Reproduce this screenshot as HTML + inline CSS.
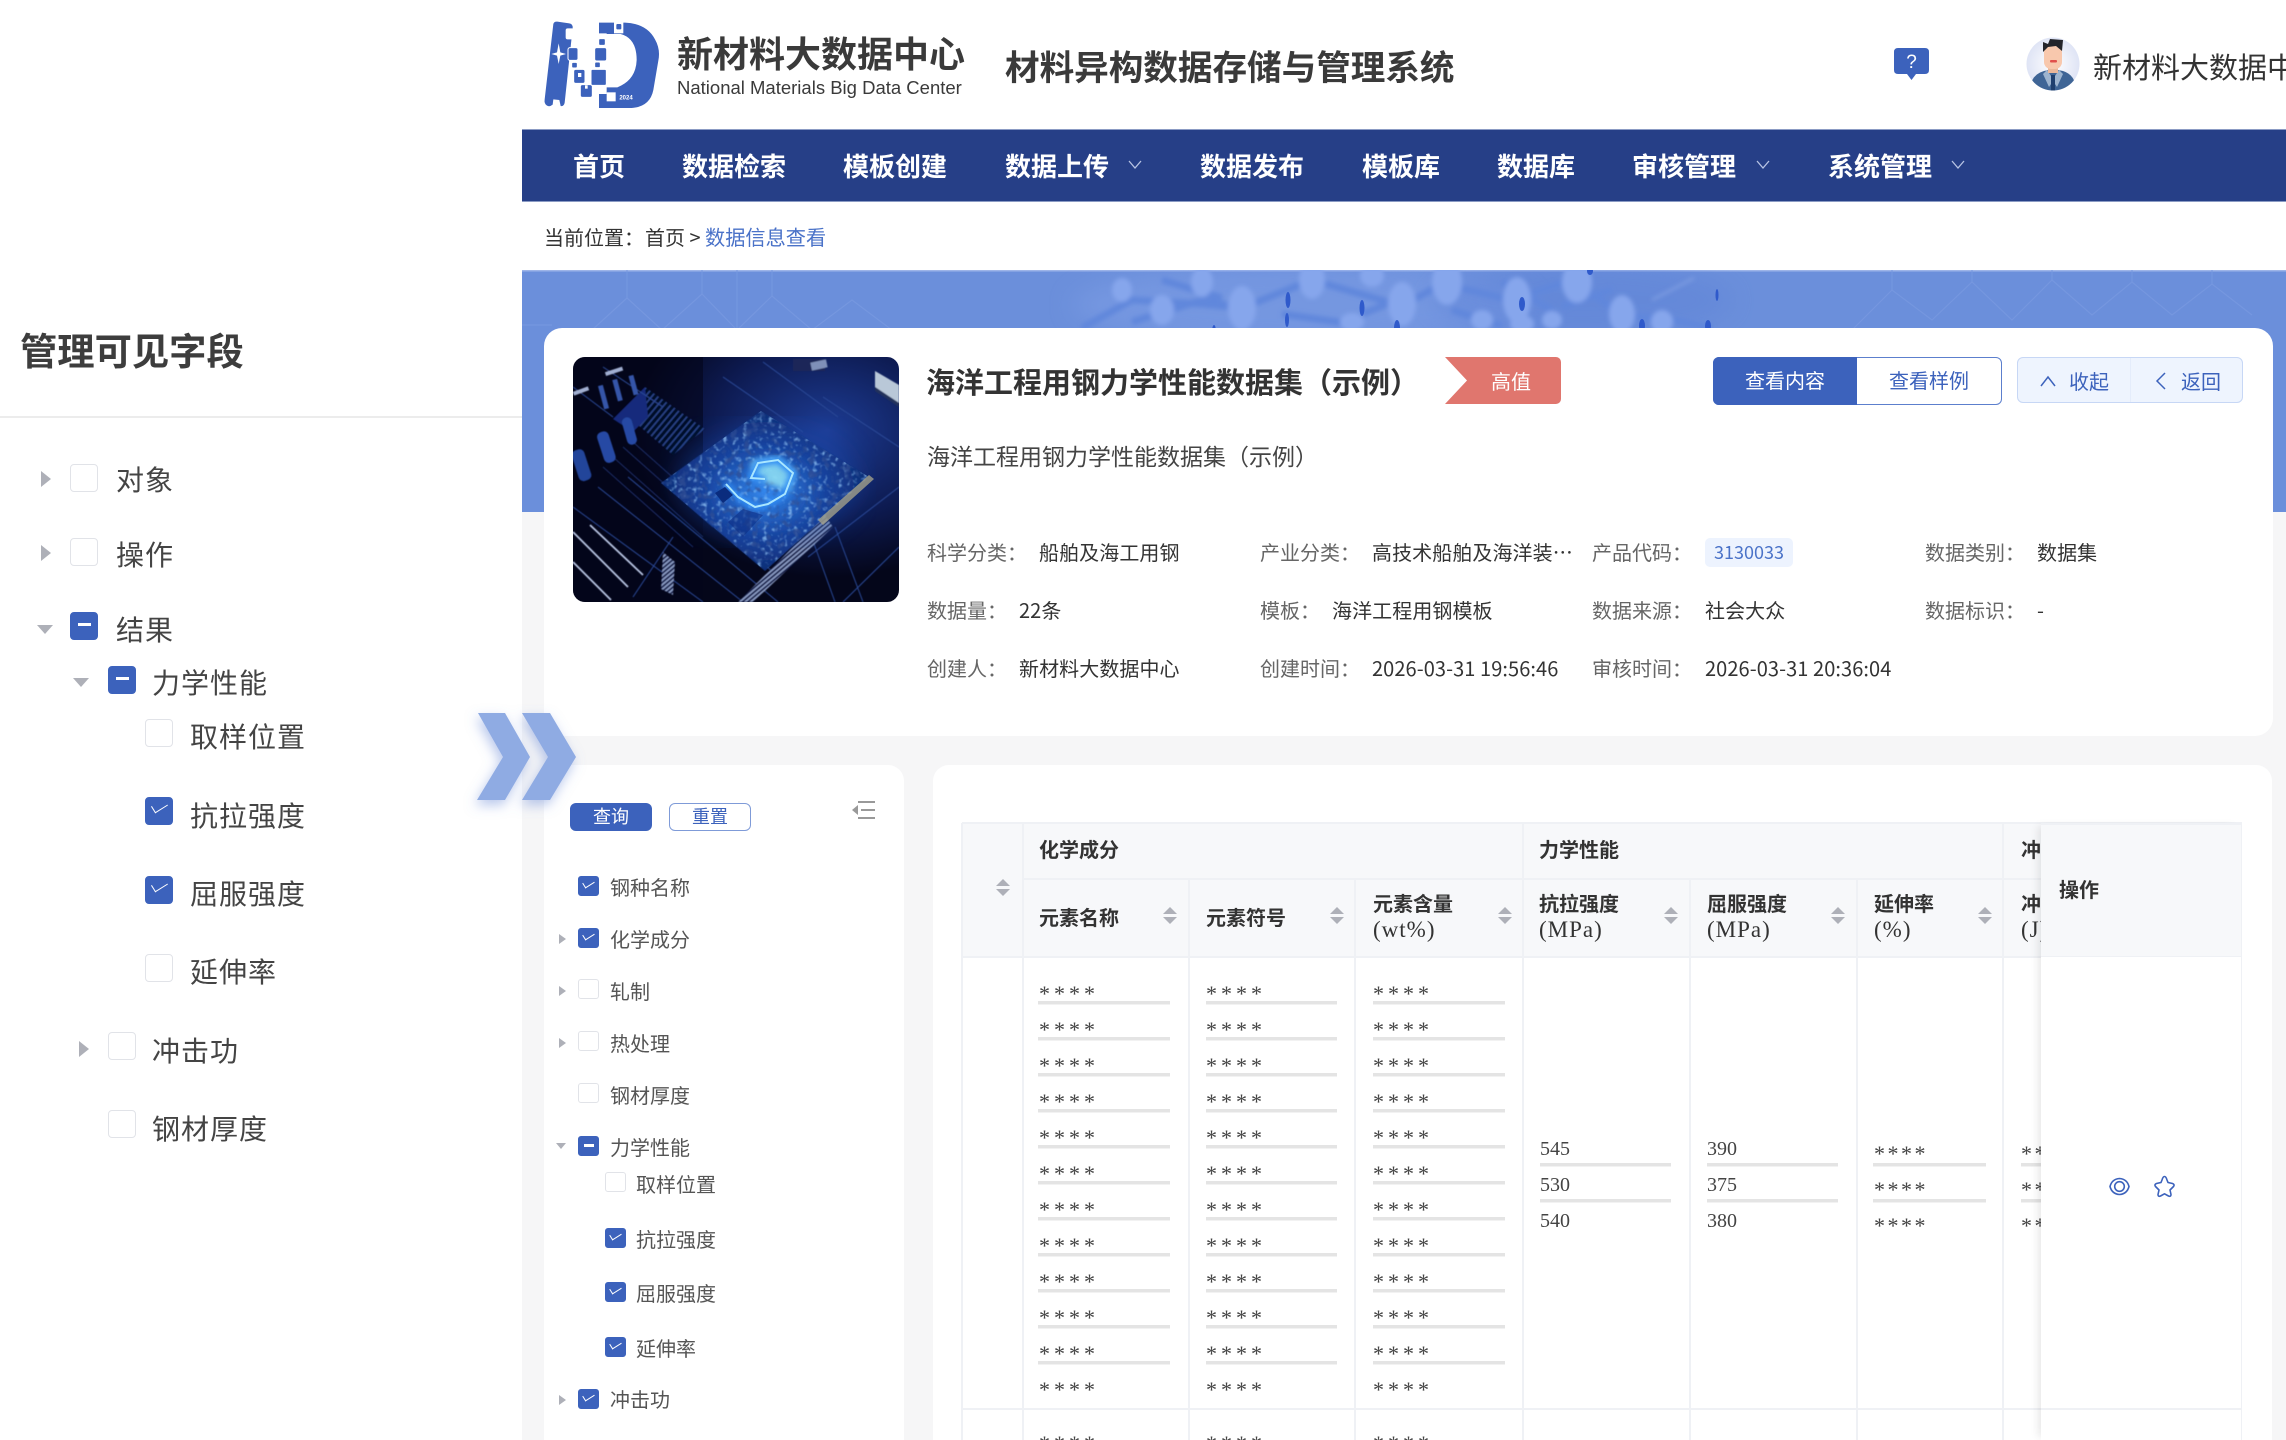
<!DOCTYPE html>
<html lang="zh"><head><meta charset="utf-8"><title>数据信息查看</title>
<style>
*{box-sizing:border-box;margin:0;padding:0}
html,body{width:2286px;height:1440px;overflow:hidden;background:#fff}
body{position:relative;font-family:"Noto Sans CJK SC","Liberation Sans",sans-serif;color:#333}
.a{position:absolute}
.t{position:absolute;white-space:nowrap;line-height:40px;height:40px}
.b{font-weight:700}
.nav{color:#fff;font-size:26px;font-weight:700;top:146px}
.tree{font-size:28px;letter-spacing:1px;color:#444}
.fl{font-size:20px;letter-spacing:0;color:#555}
.lb{font-size:20px;color:#666}
.v{font-size:20px;color:#333;letter-spacing:.08px}
.c{position:absolute;width:28px;height:28px;background:#fff;border:1.5px solid #e1e3e8;border-radius:4px}
.s{width:21px;height:20px;border-radius:3px}
.on,.mid{background:#3c62bc;border-color:#3c62bc}
.on:after{content:"";position:absolute;left:6px;top:4px;width:14px;height:7px;border-left:1.5px solid #fff;border-bottom:1.5px solid #fff;transform:rotate(-32deg)}
.s.on:after{left:4px;top:3px;width:10px;height:5px;border-left:1px solid #fff;border-bottom:1px solid #fff}
.mid:after{content:"";position:absolute;left:7px;top:10px;width:13px;height:2.5px;background:#fff}
.s.mid:after{left:5px;top:7px;width:10px;height:2.5px}
.ar{position:absolute;width:0;height:0;border-left:10px solid #aeb0b8;border-top:8px solid transparent;border-bottom:8px solid transparent;margin-top:-8px}
.ad{position:absolute;width:0;height:0;border-top:9px solid #aeb0b8;border-left:8px solid transparent;border-right:8px solid transparent;margin-top:-4px}
.ar.m{border-left-width:7px;border-top-width:5px;border-bottom-width:5px;margin-top:-5px}
.ad.m{border-top-width:6px;border-left-width:5px;border-right-width:5px;margin-top:-3px}
.hl{position:absolute;background:#eff1f5}
.th{font-size:20px;font-weight:700;color:#333;font-family:"Liberation Serif","Noto Sans CJK SC",serif}
.un{font-family:"Liberation Serif",serif;font-size:23px;letter-spacing:1px;color:#333;font-weight:400}
.ast{position:absolute;width:130px;font-family:"Liberation Serif",serif;font-size:22px;letter-spacing:4px;line-height:36px;color:#444;white-space:pre-line;overflow:hidden}
.ln{position:absolute;background:repeating-linear-gradient(#e4e4e4 0 3.5px,transparent 3.5px 36px)}
.sort{position:absolute;width:14px;height:17px;margin:3px 0 0 1px}
.sort:before{content:"";position:absolute;left:0;top:0;border-bottom:7.5px solid #aeb0b8;border-left:7px solid transparent;border-right:7px solid transparent}
.sort:after{content:"";position:absolute;left:0;bottom:0;border-top:7.5px solid #aeb0b8;border-left:7px solid transparent;border-right:7px solid transparent}
.num{position:absolute;font-family:"Liberation Serif",serif;font-size:20px;color:#444;line-height:36px;white-space:pre-line}
</style></head>
<body>

<!-- header logo -->
<svg class="a" style="left:530px;top:10px" width="140" height="110" viewBox="0 0 420 330">
<path fill="#3c62bc" d="M70 42Q72 34 82 35L118 40Q129 42 128 54L104 278Q102 290 92 288L88 270L70 268L68 284Q58 292 50 286Q42 280 44 268Z"/>
<rect x="107" y="55" width="25" height="33" rx="6" fill="#fff"/>
<path fill="#fff" d="M86 100L91 127L108 132L91 137L86 162L81 137L64 132L81 127Z"/>
<g fill="#3c62bc" stroke="#fff" stroke-width="3">
<rect x="114" y="113" width="30" height="38" rx="6"/>
<rect x="125" y="157" width="17" height="17" rx="4"/>
<rect x="131" y="178" width="34" height="42" rx="6"/>
<rect x="151" y="224" width="36" height="38" rx="6"/>
<rect x="194" y="113" width="36" height="40" rx="6"/>
<rect x="206" y="86" width="20" height="20" rx="4"/>
<rect x="194" y="156" width="17" height="17" rx="4"/>
<rect x="183" y="178" width="46" height="48" rx="4"/>
</g>
<rect x="144" y="189" width="10" height="12" fill="#fff"/><rect x="165" y="226" width="8" height="10" fill="#fff"/>
<path fill="#3c62bc" d="M207 38L285 38Q350 40 375 88Q392 118 385 152L370 240Q360 290 305 294L207 294L207 252L230 252L230 232L262 232Q318 210 320 150Q320 85 272 72L230 72L230 70L207 70Z"/>
<rect x="252" y="36" width="28" height="34" fill="#fff"/><rect x="259" y="42" width="15" height="16" rx="3" fill="#3c62bc"/>
<rect x="230" y="247" width="27" height="27" fill="#fff"/>
<text x="268" y="268" font-family="Liberation Sans,sans-serif" font-size="18" font-weight="700" fill="#fff">2024</text>
</svg>
<div class="t b" style="left:677px;top:32px;font-size:36px;color:#3a3a3a">新材料大数据中心</div>
<div class="t" style="left:677px;top:68px;font-family:'Liberation Sans',sans-serif;font-size:18.5px;color:#3a3a3a">National Materials Big Data Center</div>
<div class="t b" style="left:1005px;top:45px;font-size:34.6px;color:#3a3a3a">材料异构数据存储与管理系统</div>

<!-- help -->
<svg class="a" style="left:1894px;top:48px" width="36" height="33" viewBox="0 0 36 33"><path fill="#3c62bc" d="M4 0H31Q35 0 35 4V22Q35 26 31 26H22L17.500 32L13 26H4Q0 26 0 22V4Q0 0 4 0Z"/><text x="17.500" y="20" text-anchor="middle" font-family="Liberation Sans,sans-serif" font-size="19" fill="#fff">?</text></svg>
<!-- avatar -->
<svg class="a" style="left:2026px;top:37px" width="56" height="54" viewBox="0 0 56 54">
<defs><radialGradient id="av"><stop offset="0" stop-color="#fff"/><stop offset="1" stop-color="#dfe4f5"/></radialGradient><clipPath id="avc"><ellipse cx="27" cy="27" rx="26.500" ry="26.500"/></clipPath></defs>
<ellipse cx="27" cy="27" rx="26.500" ry="26.500" fill="url(#av)"/>
<g clip-path="url(#avc)">
<path fill="#3f6596" d="M4 54Q4 38 18 34L27 32L37 34Q50 38 50 54Z"/>
<path fill="#9db4cf" d="M21 33L27 42L33 33L37 37L31 50L27 44L23 50L17 37Z"/>
<rect x="25" y="38" width="4" height="16" fill="#1f3f6e"/>
<rect x="22" y="26" width="10" height="10" fill="#eab79a"/>
<rect x="18" y="8" width="18" height="24" rx="7" fill="#f8c8ad"/>
<path fill="#23242a" d="M17 15L17 5L22 7L24 2L37 3L36 14L30 9L22 10Z"/>
<rect x="24" y="23" width="7" height="2.500" rx="1" fill="#e0504c"/>
</g></svg>
<div class="t" style="left:2093px;top:46px;font-size:29px;color:#333">新材料大数据中心</div>

<!-- nav -->
<div class="a" style="left:522px;top:129px;width:1764px;height:73px;background:#263f87;border-top:1px solid #8b9bc4;border-bottom:1px solid #8b9bc4"></div>
<div class="t nav" style="left:573px">首页</div>
<div class="t nav" style="left:682px">数据检索</div>
<div class="t nav" style="left:843px">模板创建</div>
<div class="t nav" style="left:1005px">数据上传</div>
<div class="t nav" style="left:1200px">数据发布</div>
<div class="t nav" style="left:1362px">模板库</div>
<div class="t nav" style="left:1497px">数据库</div>
<div class="t nav" style="left:1632px">审核管理</div>
<div class="t nav" style="left:1828px">系统管理</div>
<svg class="a" style="left:1128px;top:160px" width="14" height="10" viewBox="0 0 14 10"><path d="M1 1L7 8L13 1" fill="none" stroke="#b8c4e4" stroke-width="1.300"/></svg>
<svg class="a" style="left:1756px;top:160px" width="14" height="10" viewBox="0 0 14 10"><path d="M1 1L7 8L13 1" fill="none" stroke="#b8c4e4" stroke-width="1.300"/></svg>
<svg class="a" style="left:1951px;top:160px" width="14" height="10" viewBox="0 0 14 10"><path d="M1 1L7 8L13 1" fill="none" stroke="#b8c4e4" stroke-width="1.300"/></svg>

<!-- breadcrumb -->
<div class="t" style="left:544px;top:217px;font-size:20px;color:#333">当前位置：</div>
<div class="t" style="left:645px;top:217px;font-size:20px;color:#333">首页 &gt;</div>
<div class="t" style="left:705px;top:217px;font-size:20.2px;color:#4a72c8">数据信息查看</div>

<!-- gray + banner -->
<div class="a" style="left:522px;top:512px;width:1764px;height:928px;background:#f6f6f7"></div>
<svg class="a" style="left:522px;top:270px" width="1764" height="242" viewBox="0 0 1764 242">
<defs><filter id="bl"><feGaussianBlur stdDeviation="2"/></filter><filter id="bl2"><feGaussianBlur stdDeviation="12"/></filter></defs>
<rect width="1764" height="242" fill="#6b8fdb"/>
<rect y="0" width="1764" height="1.500" fill="#9db4e8"/>
<g fill="none" stroke="#7898e0" stroke-width="1.200" opacity=".8">
<path d="M70 60L105 28L140 60M140 60L180 24L215 60L250 26L290 60M250 26L250 0M180 24L180 0M105 28L105 0M215 60L215 0M290 60L330 30L370 60M0 55H30"/>
<path d="M1330 60L1370 20L1410 50L1450 12L1490 50L1530 10L1570 45L1610 12L1650 45L1690 14L1730 45M1370 20V0M1450 12V0M1530 10V0M1610 12V0M1690 14V0"/>
</g>
<ellipse cx="780" cy="35" rx="230" ry="40" fill="#7f9fe6" opacity=".5" filter="url(#bl2)"/>
<ellipse cx="1060" cy="30" rx="150" ry="36" fill="#5c80d6" opacity=".4" filter="url(#bl2)"/>
<g filter="url(#bl)">
<g stroke="#6187dc" stroke-width="7" fill="none"><path d="M560 58L610 30L680 34L720 38L790 10L880 36L920 14L990 30L1050 10L1100 45M1100 45L1150 50L1190 58M840 44L890 24M610 52L680 30L720 38M930 40L980 56M640 10L700 28M760 44L830 54M980 12L1030 40M1040 36L1090 20"/><path d="M1130 30L1172 8" stroke="#8faae8" stroke-width="1.500"/></g>
<g fill="#86a6ec">
<ellipse cx="720" cy="38" rx="14" ry="22"/><ellipse cx="790" cy="10" rx="13" ry="19"/><ellipse cx="880" cy="34" rx="14" ry="22"/><ellipse cx="925" cy="12" rx="15" ry="23"/><ellipse cx="995" cy="30" rx="14" ry="23"/><ellipse cx="1055" cy="12" rx="15" ry="21"/><ellipse cx="1100" cy="44" rx="13" ry="19"/><ellipse cx="1140" cy="52" rx="11" ry="12"/><ellipse cx="640" cy="40" rx="12" ry="15"/><ellipse cx="1000" cy="54" rx="12" ry="9"/><ellipse cx="600" cy="20" rx="10" ry="12"/><ellipse cx="680" cy="12" rx="11" ry="15"/><ellipse cx="830" cy="52" rx="12" ry="9"/><ellipse cx="960" cy="50" rx="11" ry="10"/><ellipse cx="1030" cy="50" rx="10" ry="9"/><ellipse cx="850" cy="6" rx="12" ry="11"/>
</g></g>
<g fill="#2f5acb" filter="url(#bl2)" opacity="0"></g>
<g fill="#2f5acb">
<ellipse cx="692" cy="62" rx="2" ry="7"/><ellipse cx="766" cy="30" rx="2.500" ry="8"/><ellipse cx="765" cy="50" rx="2" ry="7"/><ellipse cx="840" cy="38" rx="2.500" ry="8"/><ellipse cx="875" cy="58" rx="3" ry="8"/><ellipse cx="1000" cy="34" rx="3" ry="7"/><ellipse cx="1120" cy="56" rx="3" ry="7"/><ellipse cx="1068" cy="1" rx="3" ry="4"/><ellipse cx="1186" cy="56" rx="3" ry="6"/><ellipse cx="1195" cy="25" rx="1.500" ry="6"/>
</g>
</svg>

<!-- info card -->
<div class="a" style="left:544px;top:328px;width:1729px;height:408px;background:#fff;border-radius:18px"></div>
<svg class="a" style="left:573px;top:357px;border-radius:12px" width="326" height="245" viewBox="0 0 326 245">
<defs>
<radialGradient id="g1" cx=".78" cy=".3" r=".6"><stop offset="0" stop-color="#1d3c94"/><stop offset=".6" stop-color="#0d1a50"/><stop offset="1" stop-color="#04061a"/></radialGradient>
<radialGradient id="g2" cx=".5" cy=".5" r=".58"><stop offset="0" stop-color="#3487ec"/><stop offset=".5" stop-color="#17439f"/><stop offset="1" stop-color="#0c2566"/></radialGradient>
<filter id="soft"><feGaussianBlur stdDeviation=".6"/></filter><filter id="glow"><feGaussianBlur stdDeviation="3"/></filter><filter id="g3"><feGaussianBlur stdDeviation="14"/></filter>
<filter id="texL" x="0" y="0" width="100%" height="100%"><feTurbulence type="fractalNoise" baseFrequency=".2" numOctaves="2" seed="4"/><feColorMatrix values="0 0 0 0 .35 0 0 0 0 .65 0 0 0 0 1 0 0 0 4 -2.200"/><feGaussianBlur stdDeviation=".5"/></filter>
<filter id="texD" x="0" y="0" width="100%" height="100%"><feTurbulence type="fractalNoise" baseFrequency=".14" numOctaves="2" seed="9"/><feColorMatrix values="0 0 0 0 .03 0 0 0 0 .08 0 0 0 0 .3 0 0 0 5 -2.600"/><feGaussianBlur stdDeviation=".5"/></filter>
<clipPath id="chipc"><polygon points="188,54 296,120 192,214 88,126"/></clipPath>
<pattern id="hat" width="5" height="5" patternUnits="userSpaceOnUse" patternTransform="rotate(40)"><rect width="5" height="5" fill="#060c28"/><rect width="1.500" height="5" fill="#2a4389"/></pattern>
<pattern id="hat2" width="3.500" height="8" patternUnits="userSpaceOnUse" patternTransform="rotate(50)"><rect width="3.500" height="8" fill="#141f4c"/><rect width="1.600" height="8" fill="#8fa0c8"/></pattern>
</defs>
<rect width="326" height="245" fill="url(#g1)"/>
<rect width="130" height="245" fill="#03051a" opacity=".6"/>
<g filter="url(#soft)">
<polygon points="72,30 132,72 100,98 50,55" fill="url(#hat)"/>
<polygon points="40,62 72,30 75,60 60,75" fill="#152c7c"/>
<g stroke="#2a4896" stroke-width="1" fill="none"><path d="M0 150L130 245M25 130L170 245M55 120L205 245M100 130L200 215M150 20L230 75M190 5L265 60M250 40L326 90M0 30L40 60M30 10L90 50M235 200L326 130M270 245L326 190M262 245L235 170M290 245L262 170M60 240L100 180"/></g>
<g stroke="#b8c4e2" stroke-width="1.800" fill="none"><path d="M0 205L38 243M0 175L55 230M17 168L70 218"/></g>
<g stroke="#1b2a60" stroke-width="1.100"><path d="M50 90L140 170M60 85L150 165M40 100L130 180M30 110L120 190"/></g>
<polygon points="90,195 102,205 100,238 88,232" fill="url(#hat2)"/>
<polygon points="165,245 180,245 260,170 252,158" fill="url(#hat2)"/>
<g><rect x="28" y="74" width="12" height="32" rx="5" fill="#264aa4" transform="rotate(-18 34 92)"/><rect x="52" y="60" width="10" height="28" rx="5" fill="#264aa4" transform="rotate(-16 57 76)"/><rect x="2" y="92" width="13" height="32" rx="5" fill="#22449a" transform="rotate(-18 9 108)"/><rect x="28" y="28" width="5" height="24" fill="#3655a8" transform="rotate(-15 31 40)"/><rect x="42" y="22" width="5" height="22" fill="#3655a8" transform="rotate(-15 45 33)"/><rect x="58" y="18" width="5" height="20" fill="#3655a8" transform="rotate(-15 61 28)"/><rect x="32" y="12" width="18" height="4" fill="#a0aed0" transform="rotate(-18 42 14)"/><rect x="0" y="32" width="16" height="4" fill="#a0aed0" transform="rotate(-20 8 34)"/></g>
<rect x="220" y="2" width="32" height="12" fill="#1a2858"/><rect x="238" y="4" width="16" height="8" fill="#7f90b8" transform="rotate(-12 246 8)"/>
<polygon points="302,14 326,28 326,46 302,30" fill="#b9c8d8"/><polygon points="302,30 326,46 326,50 302,34" fill="#22315c"/>
</g>
<ellipse cx="195" cy="125" rx="90" ry="55" fill="#1f56c8" opacity=".4" filter="url(#g3)"/>
<polygon points="188,54 296,120 192,214 88,126" fill="url(#g2)" filter="url(#soft)"/>
<g clip-path="url(#chipc)"><rect x="80" y="50" width="225" height="170" filter="url(#texL)" opacity=".7"/><rect x="80" y="50" width="225" height="170" filter="url(#texD)" opacity=".7"/></g>
<polygon points="296,118 301,122 250,168 245,163" fill="#a3a08a" opacity=".8"/>
<polygon points="178,104 205,100 223,115 217,135 180,120" fill="#8cdcf3" opacity=".9" filter="url(#glow)"/>
<path d="M153 127L165 140L182 150L195 147L212 137L220 116L205 103L185 106L178 121L192 122" fill="none" stroke="#2d8bf5" stroke-width="7" filter="url(#glow)"/>
<path d="M153 127L165 140L182 150L195 147L212 137L220 116L205 103L185 106L178 121L192 122" fill="none" stroke="#a9e6ff" stroke-width="2"/>
<polygon points="142,136 152,130 160,138 150,146" fill="#0a2c7e"/><polygon points="170,152 190,158 170,180 155,165" fill="#0d2f86" opacity=".6"/>
</svg>

<div class="t b" style="left:926px;top:361px;font-size:29px;color:#333">海洋工程用钢力学性能数据集（示例）</div>
<div class="a" style="left:1445px;top:357px;width:116px;height:47px;background:#e0766e;border-radius:0 5px 5px 0;clip-path:polygon(0 0,100% 0,100% 100%,0 100%,22px 50%)"></div>
<div class="t" style="left:1491px;top:361px;font-size:20px;color:#fff">高值</div>
<div class="a" style="left:1713px;top:357px;width:289px;height:48px;background:#fff;border:1.500px solid #5c7fcd;border-radius:6px"></div>
<div class="a" style="left:1713px;top:357px;width:144px;height:48px;background:#3c62bc;border-radius:6px 0 0 6px"></div>
<div class="t" style="left:1745px;top:360px;font-size:20px;color:#fff">查看内容</div>
<div class="t" style="left:1889px;top:360px;font-size:20px;color:#3c62bc">查看样例</div>
<div class="a" style="left:2017px;top:357px;width:226px;height:46px;background:#eef4fe;border:1.500px solid #c7d7f5;border-radius:6px"></div>
<div class="a" style="left:2130px;top:358px;width:1px;height:44px;background:#e4ecfb"></div>
<svg class="a" style="left:2040px;top:375px" width="16" height="12" viewBox="0 0 16 12"><path d="M1 11L8 2L15 11" fill="none" stroke="#3c62bc" stroke-width="1.500"/></svg>
<div class="t" style="left:2069px;top:361px;font-size:20px;color:#3c62bc">收起</div>
<svg class="a" style="left:2155px;top:372px" width="12" height="18" viewBox="0 0 12 18"><path d="M10 1L2 9L10 17" fill="none" stroke="#3c62bc" stroke-width="1.500"/></svg>
<div class="t" style="left:2181px;top:361px;font-size:20px;color:#3c62bc">返回</div>

<div class="t" style="left:927px;top:435px;font-size:23px;color:#444">海洋工程用钢力学性能数据集（示例）</div>

<div class="t lb" style="left:927px;top:532px">科学分类：</div><div class="t v" style="left:1039px;top:532px">船舶及海工用钢</div>
<div class="t lb" style="left:1260px;top:532px">产业分类：</div><div class="t v" style="left:1372px;top:532px">高技术船舶及海洋装⋯</div>
<div class="t lb" style="left:1592px;top:532px">产品代码：</div>
<div class="a" style="left:1705px;top:538px;width:88px;height:29px;background:#edf3fe;border-radius:5px"></div>
<div class="t" style="left:1714px;top:532px;font-size:18px;color:#4a72c8">3130033</div>
<div class="t lb" style="left:1925px;top:532px">数据类别：</div><div class="t v" style="left:2037px;top:532px">数据集</div>

<div class="t lb" style="left:927px;top:590px">数据量：</div><div class="t v" style="left:1019px;top:590px">22条</div>
<div class="t lb" style="left:1260px;top:590px">模板：</div><div class="t v" style="left:1332px;top:590px">海洋工程用钢模板</div>
<div class="t lb" style="left:1592px;top:590px">数据来源：</div><div class="t v" style="left:1705px;top:590px">社会大众</div>
<div class="t lb" style="left:1925px;top:590px">数据标识：</div><div class="t v" style="left:2037px;top:590px">-</div>

<div class="t lb" style="left:927px;top:648px">创建人：</div><div class="t v" style="left:1019px;top:648px">新材料大数据中心</div>
<div class="t lb" style="left:1260px;top:648px">创建时间：</div><div class="t v" style="left:1372px;top:648px">2026-03-31 19:56:46</div>
<div class="t lb" style="left:1592px;top:648px">审核时间：</div><div class="t v" style="left:1705px;top:648px">2026-03-31 20:36:04</div>

<!-- filter card -->
<div class="a" style="left:544px;top:765px;width:360px;height:700px;background:#fff;border-radius:16px"></div>
<div class="a" style="left:570px;top:803px;width:82px;height:28px;background:#3c62bc;border-radius:6px"></div>
<div class="t" style="left:593px;top:796px;font-size:18px;color:#fff">查询</div>
<div class="a" style="left:669px;top:803px;width:82px;height:28px;background:#fff;border:1.500px solid #7f9bd8;border-radius:6px"></div>
<div class="t" style="left:692px;top:796px;font-size:18px;color:#3c62bc">重置</div>
<svg class="a" style="left:852px;top:800px" width="24" height="20" viewBox="0 0 24 20"><polygon points="0,10 6,5 6,15" fill="#999"/><g stroke="#999" stroke-width="2"><path d="M6 2H23M9 10H23M6 18H23"/></g></svg>

<i class="c s on" style="left:578px;top:876px"></i><div class="t fl" style="left:610px;top:867px">钢种名称</div>
<i class="ar m" style="left:559px;top:939px"></i><i class="c s on" style="left:578px;top:928px"></i><div class="t fl" style="left:610px;top:919px">化学成分</div>
<i class="ar m" style="left:559px;top:991px"></i><i class="c s" style="left:578px;top:979px"></i><div class="t fl" style="left:610px;top:971px">轧制</div>
<i class="ar m" style="left:559px;top:1043px"></i><i class="c s" style="left:578px;top:1031px"></i><div class="t fl" style="left:610px;top:1023px">热处理</div>
<i class="c s" style="left:578px;top:1083px"></i><div class="t fl" style="left:610px;top:1075px">钢材厚度</div>
<i class="ad m" style="left:556px;top:1146px"></i><i class="c s mid" style="left:578px;top:1136px"></i><div class="t fl" style="left:610px;top:1127px">力学性能</div>
<i class="c s" style="left:605px;top:1172px"></i><div class="t fl" style="left:636px;top:1164px">取样位置</div>
<i class="c s on" style="left:605px;top:1228px"></i><div class="t fl" style="left:636px;top:1219px">抗拉强度</div>
<i class="c s on" style="left:605px;top:1282px"></i><div class="t fl" style="left:636px;top:1273px">屈服强度</div>
<i class="c s on" style="left:605px;top:1337px"></i><div class="t fl" style="left:636px;top:1328px">延伸率</div>
<i class="ar m" style="left:559px;top:1400px"></i><i class="c s on" style="left:578px;top:1389px"></i><div class="t fl" style="left:610px;top:1379px">冲击功</div>

<!-- table card -->
<div class="a" style="left:933px;top:765px;width:1339px;height:700px;background:#fff;border-radius:16px"></div>
<div class="a" style="left:962px;top:823px;width:1280px;height:134px;background:#f7f8fa"></div>
<div class="hl" style="left:962px;top:822px;width:1280px;height:2px"></div>
<div class="hl" style="left:1022px;top:878px;width:1020px;height:1.500px"></div>
<div class="hl" style="left:962px;top:956px;width:1280px;height:1.500px"></div>
<div class="hl" style="left:962px;top:1408px;width:1280px;height:1.500px"></div>
<div class="hl" style="left:961px;top:823px;width:1.500px;height:617px"></div>
<div class="hl" style="left:1022px;top:823px;width:1.500px;height:617px"></div>
<div class="hl" style="left:1188px;top:879px;width:1.500px;height:561px"></div>
<div class="hl" style="left:1354px;top:879px;width:1.500px;height:561px"></div>
<div class="hl" style="left:1522px;top:823px;width:1.500px;height:617px"></div>
<div class="hl" style="left:1689px;top:879px;width:1.500px;height:561px"></div>
<div class="hl" style="left:1856px;top:879px;width:1.500px;height:561px"></div>
<div class="hl" style="left:2002px;top:823px;width:1.500px;height:617px"></div>

<i class="sort" style="left:995px;top:876px"></i>
<div class="t th" style="left:1039px;top:831px">化学成分</div>
<div class="t th" style="left:1539px;top:831px">力学性能</div>
<div class="t th" style="left:2021px;top:831px">冲击</div>
<div class="t th" style="left:1039px;top:899px">元素名称</div><i class="sort" style="left:1162px;top:904px"></i>
<div class="t th" style="left:1206px;top:899px">元素符号</div><i class="sort" style="left:1329px;top:904px"></i>
<div class="t th" style="left:1373px;top:885px">元素含量</div><div class="t un" style="left:1373px;top:910px">(wt%)</div><i class="sort" style="left:1497px;top:904px"></i>
<div class="t th" style="left:1539px;top:885px">抗拉强度</div><div class="t un" style="left:1539px;top:910px">(MPa)</div><i class="sort" style="left:1663px;top:904px"></i>
<div class="t th" style="left:1707px;top:885px">屈服强度</div><div class="t un" style="left:1707px;top:910px">(MPa)</div><i class="sort" style="left:1830px;top:904px"></i>
<div class="t th" style="left:1874px;top:885px">延伸率</div><div class="t un" style="left:1874px;top:910px">(%)</div><i class="sort" style="left:1977px;top:904px"></i>
<div class="t th" style="left:2021px;top:885px">冲击功</div><div class="t un" style="left:2021px;top:910px">(J)</div>

<div class="ast" style="left:1039px;top:976px;height:432px">****
****
****
****
****
****
****
****
****
****
****
****</div>
<div class="ast" style="left:1206px;top:976px;height:432px">****
****
****
****
****
****
****
****
****
****
****
****</div>
<div class="ast" style="left:1373px;top:976px;height:432px">****
****
****
****
****
****
****
****
****
****
****
****</div>
<div class="ln" style="left:1038px;top:1001px;width:132px;height:364px"></div>
<div class="ln" style="left:1206px;top:1001px;width:131px;height:364px"></div>
<div class="ln" style="left:1373px;top:1001px;width:132px;height:364px"></div>

<div class="num" style="left:1540px;top:1131px">545
530
540</div>
<div class="num" style="left:1707px;top:1131px">390
375
380</div>
<div class="ast" style="left:1874px;top:1136px;height:108px;letter-spacing:2.500px">****
****
****</div>
<div class="ast" style="left:2021px;top:1136px;height:108px;letter-spacing:2.500px">****
****
****</div>
<div class="ln" style="left:1540px;top:1163px;width:131px;height:40px"></div>
<div class="ln" style="left:1707px;top:1163px;width:131px;height:40px"></div>
<div class="ln" style="left:1873px;top:1163px;width:113px;height:40px"></div>
<div class="ln" style="left:2021px;top:1163px;width:24px;height:40px"></div>
<div class="ast" style="left:1039px;top:1426px;height:20px">****</div>
<div class="ast" style="left:1206px;top:1426px;height:20px">****</div>
<div class="ast" style="left:1373px;top:1426px;height:20px">****</div>

<!-- fixed column -->
<div class="a" style="left:2041px;top:823px;width:201px;height:617px;background:#fff;box-shadow:-6px 0 8px -3px rgba(0,0,0,.09);border-right:1.500px solid #eff1f5"></div>
<div class="a" style="left:2041px;top:823px;width:201px;height:134px;background:#f7f8fa;border-top:2px solid #eff1f5;border-bottom:1.500px solid #eff1f5;border-right:1.500px solid #eff1f5"></div>
<div class="hl" style="left:2041px;top:1408px;width:201px;height:1.500px"></div>
<div class="t th" style="left:2059px;top:871px">操作</div>
<svg class="a" style="left:2109px;top:1177px" width="21" height="19" viewBox="0 0 21 19"><g fill="none" stroke="#3c62bc" stroke-width="1.600"><path d="M1 9.500Q3 2 10.500 1.500Q18 2 20 9.500Q18 17 10.500 17.500Q3 17 1 9.500Z"/><circle cx="10.500" cy="9.500" r="4.800"/></g></svg>
<svg class="a" style="left:2153px;top:1175px" width="23" height="23" viewBox="0 0 23 23"><path d="M11.500 1.500Q13 1.500 14 5L15 7.500L19.500 8.500Q22 9.500 20.500 11.500L17 15L18 19.500Q18 22 15.500 21L11.500 18.800L7.500 21Q5 22 5 19.500L6 15L2.500 11.500Q1 9.500 3.500 8.500L8 7.500L9 5Q10 1.500 11.500 1.500Z" fill="none" stroke="#3c62bc" stroke-width="1.600" stroke-linejoin="round"/></svg>

<!-- left panel -->
<div class="a" style="left:0;top:0;width:522px;height:1440px;background:#fff;z-index:1"></div>
<div style="position:absolute;left:0;top:0;width:522px;height:1440px;z-index:2">
<div class="t b" style="left:20px;top:329px;font-size:37.300px;color:#3d3d3d">管理可见字段</div>
<div class="a" style="left:0;top:416px;width:522px;height:2px;background:#ececec"></div>
<i class="ar" style="left:41px;top:479px"></i><i class="c" style="left:70px;top:464px"></i><div class="t tree" style="left:116px;top:459px">对象</div>
<i class="ar" style="left:41px;top:553px"></i><i class="c" style="left:70px;top:538px"></i><div class="t tree" style="left:116px;top:534px">操作</div>
<i class="ad" style="left:37px;top:629px"></i><i class="c mid" style="left:70px;top:612px"></i><div class="t tree" style="left:116px;top:609px">结果</div>
<i class="ad" style="left:73px;top:682px"></i><i class="c mid" style="left:108px;top:666px"></i><div class="t tree" style="left:152px;top:662px">力学性能</div>
<i class="c" style="left:145px;top:719px"></i><div class="t tree" style="left:190px;top:716px">取样位置</div>
<i class="c on" style="left:145px;top:797px"></i><div class="t tree" style="left:190px;top:795px">抗拉强度</div>
<i class="c on" style="left:145px;top:876px"></i><div class="t tree" style="left:190px;top:873px">屈服强度</div>
<i class="c" style="left:145px;top:954px"></i><div class="t tree" style="left:190px;top:951px">延伸率</div>
<i class="ar" style="left:79px;top:1049px"></i><i class="c" style="left:108px;top:1032px"></i><div class="t tree" style="left:152px;top:1030px">冲击功</div>
<i class="c" style="left:108px;top:1110px"></i><div class="t tree" style="left:152px;top:1108px">钢材厚度</div>
</div>

<!-- chevrons -->
<svg class="a" style="left:460px;top:700px;z-index:3" width="140" height="125" viewBox="0 0 140 125">
<defs><filter id="ch" x="-20%" y="-20%" width="140%" height="150%"><feDropShadow dx="-2" dy="5" stdDeviation="6" flood-color="#6f8fd8" flood-opacity=".5"/></filter></defs>
<g fill="#8fabe3" filter="url(#ch)"><polygon points="18,13 45,13 70,57 45,100 17,100 43,57"/><polygon points="62,13 90,13 116,57 90,100 62,100 88,57"/></g>
</svg>
</body></html>
